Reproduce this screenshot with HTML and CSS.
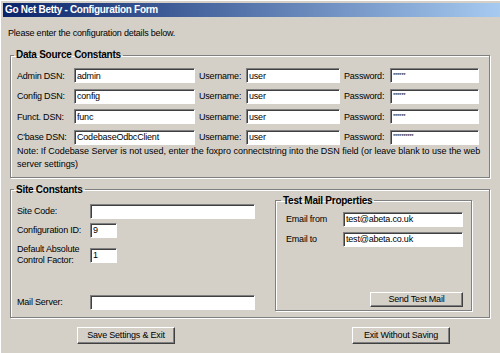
FILE: index.html
```html
<!doctype html>
<html>
<head>
<meta charset="utf-8">
<title>Go Net Betty - Configuration Form</title>
<link rel="stylesheet" href="styles.css">
</head>
<body>
 <div class="window">
	<div class="titlebar">Go Net Betty - Configuration Form</div>
	<div class="content">
		<p class="intro">Please enter the configuration details below.</p>

		<fieldset class="group ds">
			<legend>Data Source Constants</legend>
			<div class="ds-grid">
				<label>Admin DSN:</label><input class="field" value="admin">
				<label class="lbl2">Username:</label><input class="field" value="user">
				<label class="lbl2">Password:</label><input class="field pw" value="******">

				<label>Config DSN:</label><input class="field" value="config">
				<label class="lbl2">Username:</label><input class="field" value="user">
				<label class="lbl2">Password:</label><input class="field pw" value="******">

				<label>Funct. DSN:</label><input class="field" value="func">
				<label class="lbl2">Username:</label><input class="field" value="user">
				<label class="lbl2">Password:</label><input class="field pw" value="******">

				<label>C'base DSN:</label><input class="field" value="CodebaseOdbcClient">
				<label class="lbl2">Username:</label><input class="field" value="user">
				<label class="lbl2">Password:</label><input class="field pw" value="**********">
			</div>
			<p class="note">Note: If Codebase Server is not used, enter the foxpro connectstring into the DSN field (or leave blank to use the web<br>server settings)</p>
		</fieldset>

		<fieldset class="group site">
			<legend>Site Constants</legend>
			<div class="site-body">
				<div class="site-fields">
					<div class="row r1"><label>Site Code:</label><input class="field wide" value=""></div>
					<div class="row r2"><label>Configuration ID:</label><input class="field small" value="9"></div>
					<div class="row r3"><label>Default Absolute<br>Control Factor:</label><input class="field small" value="1"></div>
					<div class="row r4"><label>Mail Server:</label><input class="field wide" value=""></div>
				</div>

				<fieldset class="group mail">
					<legend>Test Mail Properties</legend>
					<div class="mail-grid">
						<label>Email from</label><input class="field" value="test@abeta.co.uk">
						<label>Email to</label><input class="field" value="test@abeta.co.uk">
					</div>
					<button class="btn send">Send Test Mail</button>
				</fieldset>
			</div>
		</fieldset>

		<div class="actions">
			<button class="btn big">Save Settings &amp; Exit</button>
			<button class="btn big">Exit Without Saving</button>
		</div>
	</div>
 </div>
</body>
</html>
```

FILE: styles.css
```css
	*{ box-sizing: border-box; }
	body{ margin: 0; background: #d4d0c8; font-family: "Liberation Sans", Arial, sans-serif; font-size: 9px; letter-spacing: -0.2px; color: #000; }
	p{ margin: 0; }
	label{ white-space: nowrap; }

	.window{ width: 500px; height: 353px; padding: 3px 0 0 3px; overflow: hidden; box-shadow: inset 1px 1px 0 #fff; }
	.titlebar{ height: 14px; line-height: 14px; padding-left: 2px; color: #fff; font-size: 10px; font-weight: bold; letter-spacing: -0.3px; background: linear-gradient(to right, #0a246a, #a6caf0); }
	.content{ padding-left: 7px; }
	.intro{ margin: 10px 0 0 -2px; line-height: 12px; }

	/* etched group boxes */
	.group{ margin: 0; min-width: 0; border: 1px solid #808080; box-shadow: inset 1px 1px 0 #fff, 1px 1px 0 #fff; }
	.group legend{ padding: 0 2px; margin-left: -3px; font-size: 10px; font-weight: bold; letter-spacing: -0.25px; line-height: 12px; }

	/* sunken text boxes */
	.field{ height: 15px; padding: 0 0 0 2px; margin: 0; font: inherit; letter-spacing: -0.2px; background: #fff; color: #000; border: 1px solid; border-color: #808080 #fff #fff #808080; box-shadow: inset 1px 1px 0 #404040; outline: none; }
	.field.pw{ font-size: 6px; letter-spacing: -0.3px; padding-bottom: 2px; }

	/* raised buttons */
	.btn{ padding: 0; margin: 0; font: inherit; letter-spacing: -0.2px; color: #000; background: #d4d0c8; border: 1px solid; border-color: #fff #404040 #404040 #fff; box-shadow: inset -1px -1px 0 #808080; }

	.ds{ width: 480px; margin-top: 10px; padding: 7px 10px 6px 6px; }
	.ds-grid{ display: grid; grid-template-columns: 57px 121px 51px 94px 50px 89px; grid-auto-rows: 15px; row-gap: 5.5px; align-items: center; }
	.ds-grid .lbl2{ padding-left: 4px; }
	.note{ line-height: 13px; letter-spacing: -0.03px; white-space: nowrap; }

	.site{ width: 480px; margin-top: 6px; padding: 0 17px 6px 6px; }
	.site-body{ display: flex; gap: 20px; align-items: flex-start; }
	.site-fields{ width: 238px; display: flex; flex-direction: column; }
	.row{ display: flex; align-items: center; height: 15px; }
	.row label{ width: 73px; flex: none; }
	.row .wide{ width: 165px; }
	.row .small{ width: 27px; }
	.r1{ margin-top: 8px; }
	.r2{ margin-top: 4px; }
	.r3{ margin-top: 6px; height: 22px; align-items: flex-start; }
	.r3 label{ line-height: 11px; }
	.r3 .small{ margin-top: 4px; }
	.r4{ margin-top: 29px; }

	.mail{ width: 197px; margin-top: -1px; padding: 5px 8px 3px 10px; display: flex; flex-direction: column; }
	.mail legend{ margin-left: -5px; }
	.mail-grid{ display: grid; grid-template-columns: 57px 120px; grid-auto-rows: 15px; row-gap: 5px; align-items: center; }
	.send{ align-self: flex-end; width: 93px; height: 15px; margin-top: 45px; }

	.actions{ display: flex; gap: 177px; padding-left: 67px; margin-top: 9px; }
	.big{ width: 98px; height: 17px; }
```
